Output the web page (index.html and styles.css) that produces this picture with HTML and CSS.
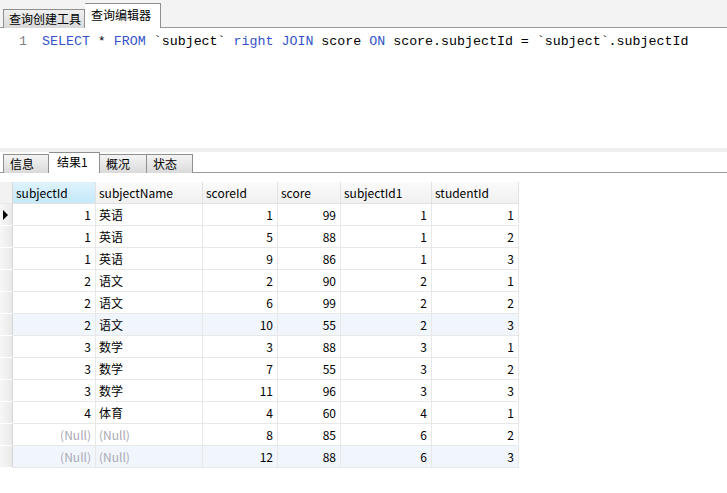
FILE: index.html
```html
<!DOCTYPE html>
<html>
<head>
<meta charset="utf-8">
<link rel="stylesheet" href="styles.css">
</head>
<body>
<div class="app">
  <div class="toptabs">
    <div class="tab">查询创建工具</div>
    <div class="tab active">查询编辑器</div>
  </div>
  <div class="editor">
    <div class="codeline"><span class="ln">1</span><span class="code"><span class="kw">SELECT</span> * <span class="kw">FROM</span> `subject` <span class="kw">right</span> <span class="kw">JOIN</span> score <span class="kw">ON</span> score.subjectId = `subject`.subjectId</span></div>
  </div>
  <div class="splitter"></div>
  <div class="bottabs">
    <div class="btab w46">信息</div>
    <div class="btab active w51">结果1</div>
    <div class="btab w47">概况</div>
    <div class="btab w46">状态</div>
  </div>
  <div class="grid">
    <div class="row head">
      <div class="ind"></div>
      <div class="hc sel">subjectId</div>
      <div class="hc">subjectName</div>
      <div class="hc">scoreId</div>
      <div class="hc">score</div>
      <div class="hc">subjectId1</div>
      <div class="hc">studentId</div>
    </div>
    <div class="row"><div class="ind"><span class="arrow"></span></div><div class="c r">1</div><div class="c">英语</div><div class="c r">1</div><div class="c r">99</div><div class="c r">1</div><div class="c r">1</div></div>
    <div class="row"><div class="ind"></div><div class="c r">1</div><div class="c">英语</div><div class="c r">5</div><div class="c r">88</div><div class="c r">1</div><div class="c r">2</div></div>
    <div class="row"><div class="ind"></div><div class="c r">1</div><div class="c">英语</div><div class="c r">9</div><div class="c r">86</div><div class="c r">1</div><div class="c r">3</div></div>
    <div class="row"><div class="ind"></div><div class="c r">2</div><div class="c">语文</div><div class="c r">2</div><div class="c r">90</div><div class="c r">2</div><div class="c r">1</div></div>
    <div class="row"><div class="ind"></div><div class="c r">2</div><div class="c">语文</div><div class="c r">6</div><div class="c r">99</div><div class="c r">2</div><div class="c r">2</div></div>
    <div class="row tint"><div class="ind"></div><div class="c r">2</div><div class="c">语文</div><div class="c r">10</div><div class="c r">55</div><div class="c r">2</div><div class="c r">3</div></div>
    <div class="row"><div class="ind"></div><div class="c r">3</div><div class="c">数学</div><div class="c r">3</div><div class="c r">88</div><div class="c r">3</div><div class="c r">1</div></div>
    <div class="row"><div class="ind"></div><div class="c r">3</div><div class="c">数学</div><div class="c r">7</div><div class="c r">55</div><div class="c r">3</div><div class="c r">2</div></div>
    <div class="row"><div class="ind"></div><div class="c r">3</div><div class="c">数学</div><div class="c r">11</div><div class="c r">96</div><div class="c r">3</div><div class="c r">3</div></div>
    <div class="row"><div class="ind"></div><div class="c r">4</div><div class="c">体育</div><div class="c r">4</div><div class="c r">60</div><div class="c r">4</div><div class="c r">1</div></div>
    <div class="row"><div class="ind"></div><div class="c r null">(Null)</div><div class="c null">(Null)</div><div class="c r">8</div><div class="c r">85</div><div class="c r">6</div><div class="c r">2</div></div>
    <div class="row tint"><div class="ind"></div><div class="c r null">(Null)</div><div class="c null">(Null)</div><div class="c r">12</div><div class="c r">88</div><div class="c r">6</div><div class="c r">3</div></div>
  </div>
</div>
</body>
</html>
```

FILE: styles.css
```css
* { box-sizing: border-box; }
html, body { margin: 0; padding: 0; background: #fff; }
body {
  width: 727px;
  height: 493px;
  overflow: hidden;
  font-family: "Noto Sans CJK SC", "Noto Sans", sans-serif;
  font-size: 12px;
  color: #000;
}
.app { display: flex; flex-direction: column; }

.toptabs {
  height: 28px;
  background: #f3f3f3;
  border-bottom: 1px solid #9a9a9a;
  display: flex;
  align-items: flex-end;
  padding-left: 3px;
}
.tab {
  height: 19px;
  width: 82px;
  margin-bottom: -1px;
  border: 1px solid #8f8f8f;
  border-bottom: none;
  background: linear-gradient(#f0f0f0, #d9d9d9);
  line-height: 17px;
  padding-left: 5px;
  white-space: nowrap;
}
.tab.active {
  height: 25px;
  width: 76px;
  background: #fff;
  line-height: 22px;
  padding-left: 6px;
  border-left: none;
  border-right: 1px solid #8f8f8f;
}

.editor {
  height: 120px;
  background: #fff;
  padding-top: 6px;
}
.codeline {
  display: flex;
  height: 16px;
  line-height: 16px;
  font-family: "Liberation Mono", monospace;
  font-size: 13.3px;
  white-space: pre;
}
.ln { width: 42px; padding-left: 19px; color: #808080; }
.kw { color: #3553c8; }

.splitter { height: 4px; background: #efefef; }

.bottabs {
  height: 21px;
  background: #fff;
  border-bottom: 1px solid #9a9a9a;
  display: flex;
  align-items: flex-end;
  padding-left: 3px;
}
.btab {
  height: 19px;
  margin-bottom: -1px;
  border: 1px solid #8f8f8f;
  border-bottom: none;
  background: linear-gradient(#f4f4f4, #dadada);
  line-height: 18px;
  padding-left: 6px;
  white-space: nowrap;
}
.btab + .btab { border-left: none; }
.btab.active {
  height: 21px;
  background: #fff;
  padding-left: 8px;
  line-height: 18px;
}
.w46 { width: 46px; }
.w47 { width: 47px; }
.w51 { width: 51px; }

.grid { margin-top: 9px; display: flex; flex-direction: column; }
.row {
  display: grid;
  grid-template-columns: 13px 83px 107px 75px 63px 91px 87px;
  height: 22px;
  width: 519px;
}
.row.head { height: 22px; }
.ind {
  background: linear-gradient(90deg, #f7f7f7, #e9e9e9);
  border-right: 1px solid #d6d6d6;
  border-bottom: 1px solid #ffffff;
  position: relative;
}
.head .ind { background: #f2f2f2; border-bottom: 1px solid #e6e6e6; }
.arrow {
  position: absolute;
  left: 3px;
  top: 6px;
  width: 0;
  height: 0;
  border-top: 5px solid transparent;
  border-bottom: 5px solid transparent;
  border-left: 5px solid #000;
}
.hc {
  background: linear-gradient(#fbfbfb, #f0f0f0);
  border-right: 1px solid #e2e2e2;
  border-bottom: 1px solid #e2e2e2;
  padding-left: 3px;
  line-height: 21px;
  white-space: nowrap;
}
.hc.sel { background: linear-gradient(#def3fd, #c5e8fa); }
.c {
  border-right: 1px solid #e8e8e8;
  border-bottom: 1px solid #e8e8e8;
  padding: 0 3px;
  line-height: 21px;
  white-space: nowrap;
}
.c.r { text-align: right; padding-right: 4px; }
.c.null { color: #a9a9b4; }
.tint .c { background: #f1f6fc; }
```
